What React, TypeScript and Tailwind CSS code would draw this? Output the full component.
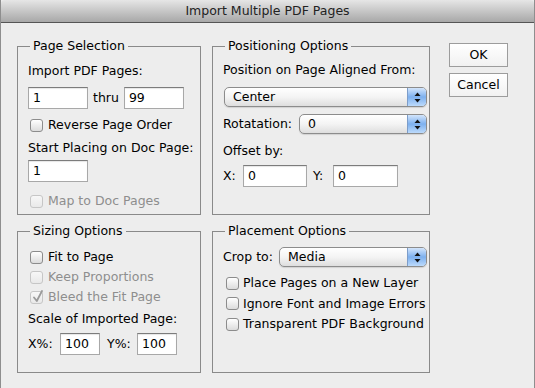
import React from "react";

const Arrows = () => (
  <svg width="7" height="11" viewBox="0 0 7 11">
    <path d="M3.5 0.5 L6.5 4 L0.5 4 Z" fill="#111" />
    <path d="M3.5 10.5 L6.5 7 L0.5 7 Z" fill="#111" />
  </svg>
);

const Select = ({ text, w }: { text: string; w: string }) => (
  <div
    className={`flex h-[20px] ${w} rounded-[5px] border border-[#8c8c8c] bg-linear-to-b from-white via-[#f4f4f4] to-[#dedede] shadow-[0_1px_1px_rgba(0,0,0,0.12)] overflow-hidden`}
  >
    <span className="flex-1 pl-[8px] leading-[18px]">{text}</span>
    <span className="w-[19px] border-l border-[#7d9dc9] bg-linear-to-b from-[#d3e5fb] via-[#7db0ee] to-[#bcdafb] flex items-center justify-center">
      <Arrows />
    </span>
  </div>
);

const Field = ({ text, w }: { text: string; w: string }) => (
  <div
    className={`h-[22px] ${w} bg-white border border-[#a8a8a8] border-t-[#7c7c7c] pl-[4px] leading-[20px] shadow-[inset_0_1px_1px_rgba(0,0,0,0.1)]`}
  >
    {text}
  </div>
);

const Check = ({
  label,
  disabled,
  checked,
  gap = "gap-[5px]",
  ml = "ml-[2px]",
}: {
  label: string;
  disabled?: boolean;
  checked?: boolean;
  gap?: string;
  ml?: string;
}) => (
  <div className={`flex items-center h-[16px] ${gap} ${ml}`}>
    <span
      className={`relative w-[13px] h-[13px] rounded-[3px] border ${
        disabled
          ? "border-[#c6c6c6] bg-linear-to-b from-[#f7f7f7] to-[#e9e9e9]"
          : "border-[#8c8c8c] bg-linear-to-b from-white to-[#dcdcdc]"
      }`}
    >
      {checked && (
        <svg
          className="absolute left-[1px] -top-[2px]"
          width="12"
          height="13"
          viewBox="0 0 12 13"
        >
          <path
            d="M2 7.5 L4.8 11 L10 1"
            fill="none"
            stroke="#9a9a9a"
            strokeWidth="1.8"
            strokeLinecap="round"
            strokeLinejoin="round"
          />
        </svg>
      )}
    </span>
    <span className={`leading-[16px] ${disabled ? "text-[#8e8e8e]" : ""}`}>
      {label}
    </span>
  </div>
);

const Group = ({
  title,
  h,
  children,
}: {
  title: string;
  h: string;
  children: React.ReactNode;
}) => (
  <div
    className={`relative ${h} border border-[#8a8a8a] pl-[10px] flex flex-col`}
  >
    <span className="absolute left-[12px] -top-[9px] px-[3px] bg-[#ededed] leading-[16px]">
      {title}
    </span>
    {children}
  </div>
);

const Button = ({ text }: { text: string }) => (
  <div className="h-[24px] w-[59px] border border-[#9c9c9c] bg-linear-to-b from-white to-[#f1f1f1] flex items-center justify-center leading-[16px]">
    {text}
  </div>
);

export default function App() {
  return (
    <div className="w-[535px] h-[388px] bg-[#ededed] border-x border-[#8e8e8e] flex flex-col font-['DejaVu_Sans',sans-serif] text-[12.5px] text-black overflow-hidden">
      <div className="h-[23px] shrink-0 border-b border-[#555] bg-linear-to-b from-[#e6e6e6] to-[#a8a8a8] flex items-center justify-center text-[#222] leading-[16px] rounded-t-[4px]">
        Import Multiple PDF Pages
      </div>
      <div className="flex pl-[16px] pt-[20px]">
        <div className="w-[184px] pt-[3px] flex flex-col gap-[16px]">
          <Group title="Page Selection" h="h-[169px]">
            <div className="pt-[16px] leading-[16px]">Import PDF Pages:</div>
            <div className="mt-[8px] flex items-center">
              <Field text="1" w="w-[60px]" />
              <span className="mx-[5px] leading-[16px]">thru</span>
              <Field text="99" w="w-[60px]" />
            </div>
            <div className="mt-[8px]">
              <Check label="Reverse Page Order" />
            </div>
            <div className="mt-[7px] leading-[16px]">
              Start Placing on Doc Page:
            </div>
            <div className="mt-[4px]">
              <Field text="1" w="w-[60px]" />
            </div>
            <div className="mt-[11px]">
              <Check label="Map to Doc Pages" disabled />
            </div>
          </Group>
          <Group title="Sizing Options" h="h-[142px]">
            <div className="pt-[17px]">
              <Check label="Fit to Page" />
            </div>
            <div className="mt-[4px]">
              <Check label="Keep Proportions" disabled />
            </div>
            <div className="mt-[4px]">
              <Check label="Bleed the Fit Page" disabled checked />
            </div>
            <div className="mt-[6px] leading-[16px]">
              Scale of Imported Page:
            </div>
            <div className="mt-[6px] flex items-center">
              <span className="w-[32px] leading-[16px]">X%:</span>
              <Field text="100" w="w-[40px]" />
              <span className="ml-[7px] w-[30px] leading-[16px]">Y%:</span>
              <Field text="100" w="w-[40px]" />
            </div>
          </Group>
        </div>
        <div className="w-[218px] ml-[11px] pt-[3px] flex flex-col gap-[16px]">
          <Group title="Positioning Options" h="h-[169px]">
            <div className="pt-[15px] leading-[16px]">
              Position on Page Aligned From:
            </div>
            <div className="mt-[9px] ml-[1px]">
              <Select text="Center" w="w-[203px]" />
            </div>
            <div className="mt-[7px] flex items-center h-[20px]">
              <span className="w-[76px] leading-[16px]">Rotatation:</span>
              <Select text="0" w="w-[128px]" />
            </div>
            <div className="mt-[9px] leading-[16px]">Offset by:</div>
            <div className="mt-[6px] flex items-center">
              <span className="w-[20px] leading-[16px]">X:</span>
              <Field text="0" w="w-[64px]" />
              <span className="ml-[6px] w-[20px] leading-[16px]">Y:</span>
              <Field text="0" w="w-[65px]" />
            </div>
          </Group>
          <Group title="Placement Options" h="h-[142px]">
            <div className="pt-[15px] flex items-center h-[35px]">
              <span className="w-[56px] leading-[16px]">Crop to:</span>
              <Select text="Media" w="w-[148px]" />
            </div>
            <div className="mt-[8px] flex flex-col gap-[4.5px]">
              <Check label="Place Pages on a New Layer" gap="gap-[4px]" ml="ml-[3px]" />
              <Check label="Ignore Font and Image Errors" gap="gap-[4px]" ml="ml-[3px]" />
              <Check label="Transparent PDF Background" gap="gap-[4px]" ml="ml-[3px]" />
            </div>
          </Group>
        </div>
        <div className="ml-[19px] flex flex-col gap-[6px]">
          <Button text="OK" />
          <Button text="Cancel" />
        </div>
      </div>
    </div>
  );
}
